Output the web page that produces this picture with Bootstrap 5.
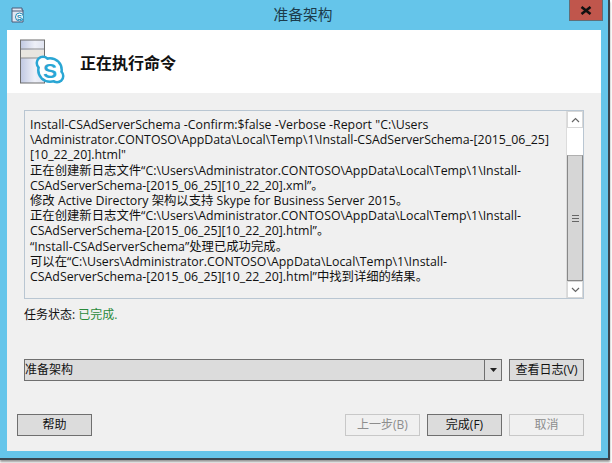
<!DOCTYPE html>
<html lang="zh"><head><meta charset="utf-8"><title>准备架构</title>
<link href="https://cdn.jsdelivr.net/npm/bootstrap@5.3.0/dist/css/bootstrap.min.css" rel="stylesheet">
<style>
html,body{margin:0;height:463px;overflow:hidden;background:#fff}
body{font-family:"Open Sans","Noto Sans CJK SC",sans-serif;font-size:12.35px;color:#111}
.win{width:610px;height:460px;background:#65c5ea;border-right:2px solid #3a4650;border-bottom:2px solid #3a4650;box-shadow:0 2px 2px #999}
.tbar{height:30px;position:relative}
.ttext{font-size:14.7px;line-height:18px;color:#1c3c4c;width:100%;text-align:center;padding-top:5px;padding-right:2px}
.tico{position:absolute;left:11px;top:7px}
.closex{position:absolute;right:5px;top:0;width:34px;height:21px;background:#c0564c;border:1px solid #5f6f78;border-top:0;display:flex;align-items:center;justify-content:center}
.inner{margin:0 7px 0 7px;height:421px;background:#f0f0f0;display:flex;flex-direction:column}
.hdr{height:63px;background:#fff;display:flex;align-items:center;padding-left:12px;gap:15px}
.hdr h1{font-size:16px;font-weight:700;margin:0;color:#111;font-family:"Noto Sans CJK SC",sans-serif;padding-top:0;line-height:20px}
.logbox{margin:17px 17px 0 17px;width:560px;height:189px;border:1px solid #b9c6d2;background:#f0f0f0;display:flex}
.logtext{flex:1;padding:6px 5px 0 5px;line-height:15.2px;white-space:nowrap;overflow:hidden}
.sbar{width:17px;border-left:1px solid #dcdcdc;display:flex;flex-direction:column}
.sbtn{height:17px;background:#fff;border:1px solid #d8d8d8;display:flex;align-items:center;justify-content:center}
.strack{height:27px;background:#fff}
.sthumb{flex:1;background:#d6d6d6;border:1px solid #888;border-top:1px solid #b0b0b0;display:flex;align-items:center;justify-content:center}
.gline{width:7px;height:7px;border-top:1px solid #666;border-bottom:1px solid #666;position:relative}
.gline::after{content:"";position:absolute;left:0;right:0;top:2px;height:1px;background:#666}
.status{margin:8px 0 0 17px;height:16px;line-height:16px;font-size:12px}
.done{color:#2a8a3a}
.selrow{margin:36px 17px 0 17px;display:flex;gap:7px}
.combo{width:478px;height:22px;background:#dcdcdc;border:1px solid #6f6f6f;display:flex;line-height:20px;font-size:12px}
.ctext{flex:1}
.carrow{width:17px;border-left:1px solid #6f6f6f;display:flex;align-items:center;justify-content:center}
.wbtn{height:22px;border-radius:0;padding:0;font-size:12px;line-height:20px;background:#dcdcdc;border:1px solid #6f6f6f;color:#111;width:75px;--bs-btn-padding-x:0}
.wbtn:disabled{background:#f0f0f0;border-color:#c8c8c8;color:#8d8d8d;opacity:1}
.btnrow{margin:33px 17px 0 10px;display:flex;gap:7px}
.spacer{flex:1}
</style></head><body>
<div class="win">
  <div class="tbar">
    <svg class="tico" width="14" height="16" viewBox="0 0 14 16"><path d="M1 1h10v2h1v12H1z" fill="#dfe6f2" stroke="#4a5a78"/><path d="M1 4h11" stroke="#4a5a78"/><circle cx="8.5" cy="10" r="4" fill="#fff" stroke="#1f8cb8"/><text x="8.5" y="12.8" font-size="8" font-weight="700" text-anchor="middle" fill="#1f8cb8" font-family="Liberation Sans">S</text></svg>
    <div class="ttext">准备架构</div>
    <div class="closex"><svg width="12" height="9" viewBox="0 0 12 9"><path d="M1.5 1l9 7M10.5 1l-9 7" stroke="#111" stroke-width="2.6"/></svg></div>
  </div>
  <div class="inner">
    <div class="hdr">
      <svg width="46" height="46" viewBox="0 0 46 46"><defs><linearGradient id="g1" x1="0" x2="1"><stop offset="0" stop-color="#c0c8e2"/><stop offset=".6" stop-color="#eef0f8"/><stop offset="1" stop-color="#dfe3f0"/></linearGradient></defs><rect x="1.5" y="1" width="24" height="43" fill="url(#g1)" stroke="#6d6d6d"/><rect x="2" y="11" width="23" height="8" fill="#e9e6e0"/><path d="M2 10h23M2 19h23" stroke="#8c8c8c"/>
      <circle cx="24" cy="24" r="7.5" fill="#2aa6d4"/><circle cx="38" cy="37" r="7.5" fill="#2aa6d4"/><circle cx="31" cy="31" r="13" fill="#2aa6d4"/><circle cx="24" cy="24" r="5" fill="#fff"/><circle cx="38" cy="37" r="5" fill="#fff"/><circle cx="31" cy="31" r="10.5" fill="#fff"/><text x="31" y="38.5" font-size="21" font-weight="700" text-anchor="middle" fill="#2aa6d4" font-family="Liberation Sans">S</text></svg>
      <h1>正在执行命令</h1>
    </div>
    <div class="logbox">
      <div class="logtext">Install-CSAdServerSchema -Confirm:$false -Verbose -Report "C:\Users<br>\Administrator.CONTOSO\AppData\Local\Temp\1\Install-CSAdServerSchema-[2015_06_25]<br>[10_22_20].html"<br>正在创建新日志文件“C:\Users\Administrator.CONTOSO\AppData\Local\Temp\1\Install-<br>CSAdServerSchema-[2015_06_25][10_22_20].xml”。<br>修改 Active Directory 架构以支持 Skype for Business Server 2015。<br>正在创建新日志文件“C:\Users\Administrator.CONTOSO\AppData\Local\Temp\1\Install-<br>CSAdServerSchema-[2015_06_25][10_22_20].html”。<br>“Install-CSAdServerSchema”处理已成功完成。<br>可以在“C:\Users\Administrator.CONTOSO\AppData\Local\Temp\1\Install-<br>CSAdServerSchema-[2015_06_25][10_22_20].html”中找到详细的结果。</div>
      <div class="sbar">
        <div class="sbtn"><svg width="9" height="6" viewBox="0 0 9 6"><path d="M1 5l3.5-3.5L8 5" fill="none" stroke="#666" stroke-width="1.2"/></svg></div>
        <div class="strack"></div>
        <div class="sthumb"><span class="gline"></span></div>
        <div class="sbtn"><svg width="9" height="6" viewBox="0 0 9 6"><path d="M1 1l3.5 3.5L8 1" fill="none" stroke="#666" stroke-width="1.2"/></svg></div>
      </div>
    </div>
    <div class="status">任务状态: <span class="done">已完成.</span></div>
    <div class="selrow">
      <div class="combo"><span class="ctext">准备架构</span><span class="carrow"><svg width="7" height="4" viewBox="0 0 7 4"><path d="M0 0h7L3.5 4z" fill="#222"/></svg></span></div>
      <button type="button" class="btn wbtn">查看日志(V)</button>
    </div>
    <div class="btnrow">
      <button type="button" class="btn wbtn">帮助</button>
      <span class="spacer"></span>
      <button type="button" class="btn wbtn" disabled>上一步(B)</button>
      <button type="button" class="btn wbtn">完成(F)</button>
      <button type="button" class="btn wbtn" disabled>取消</button>
    </div>
  </div>
</div>
</body></html>
